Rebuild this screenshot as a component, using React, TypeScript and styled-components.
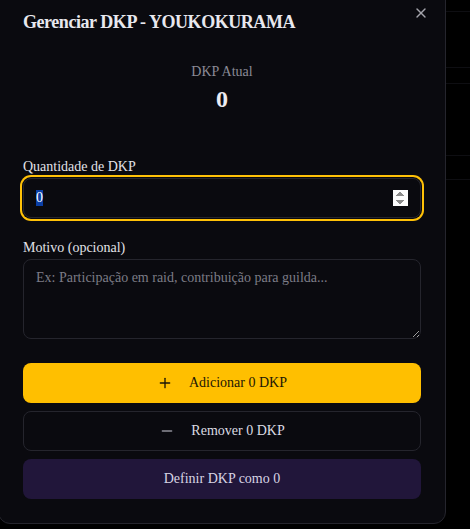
import React, { useEffect, useRef } from 'react';
import styled, { createGlobalStyle } from 'styled-components';
import { Plus, Minus, X } from 'lucide-react';

const GlobalStyle = createGlobalStyle`
  html, body {
    margin: 0;
    padding: 0;
    background: #000;
    overflow: hidden;
  }
  * { box-sizing: border-box; }
`;

const Page = styled.div`
  position: relative;
  width: 470px;
  height: 529px;
  overflow: hidden;
  background: #000;
  font-family: 'Liberation Serif', serif;
`;

// tabela por trás do overlay (só aparece na faixa da direita)
const Backdrop = styled.div`
  display: flex;
  flex-direction: column;
`;

const BackdropRow = styled.div<{ $h: number }>`
  height: ${(p) => p.$h}px;
  border-bottom: 1px solid #0e0e12;
`;

const Dialog = styled.div`
  position: absolute;
  top: -12px;
  left: -2px;
  width: 448px;
  background: #0a0a0f;
  border: 1px solid #25252d;
  border-radius: 12px;
  padding: 24px;
  display: flex;
  flex-direction: column;
  color: #e6e6ec;
`;

const CloseButton = styled.button`
  position: absolute;
  top: 16px;
  right: 16px;
  width: 16px;
  height: 16px;
  padding: 0;
  border: none;
  background: transparent;
  color: #a4a4ac;
  display: flex;
  align-items: center;
  justify-content: center;
  cursor: pointer;
`;

const Title = styled.h2`
  margin: 0;
  font-size: 18px;
  line-height: 18px;
  font-weight: 700;
  letter-spacing: -0.025em;
  color: #e8e8ee;
`;

const Current = styled.div`
  margin-top: 31px;
  display: flex;
  flex-direction: column;
  align-items: center;
`;

const CurrentLabel = styled.div`
  font-size: 14px;
  line-height: 20px;
  color: #8b8b96;
`;

const CurrentValue = styled.div`
  margin-top: 1px;
  font-size: 24px;
  line-height: 32px;
  font-weight: 700;
  color: #ececf2;
`;

const Field = styled.div<{ $top: number }>`
  margin-top: ${(p) => p.$top}px;
  display: flex;
  flex-direction: column;
  gap: 4px;
`;

const Label = styled.label`
  font-size: 14px;
  line-height: 14px;
  color: #e2e2e8;
`;

const NumberInput = styled.input<{ $focused?: boolean }>`
  height: 40px;
  width: 100%;
  padding: 0 12px;
  border: 1px solid #25252d;
  border-radius: 8px;
  background: #0a0a0f;
  color: #e6e6ec;
  font-family: inherit;
  font-size: 14px;
  outline: none;
  box-shadow: ${(p) => (p.$focused ? '0 0 0 1px #0a0a0f, 0 0 0 3px #ffc107' : 'none')};
  &::selection {
    background: #0b3fa6;
    color: #fff;
  }
`;

const TextArea = styled.textarea`
  height: 80px;
  width: 100%;
  padding: 8px 12px;
  border: 1px solid #25252d;
  border-radius: 8px;
  background: #0a0a0f;
  color: #e6e6ec;
  font-family: inherit;
  font-size: 14px;
  line-height: 20px;
  outline: none;
  &::placeholder {
    color: #7c7c86;
  }
`;

const Actions = styled.div`
  margin-top: 24px;
  display: flex;
  flex-direction: column;
  gap: 8px;
`;

const Button = styled.button<{ $variant: 'add' | 'remove' | 'set' }>`
  height: 40px;
  width: 100%;
  border-radius: 8px;
  font-family: inherit;
  font-size: 14px;
  display: flex;
  align-items: center;
  justify-content: center;
  gap: 16px;
  cursor: pointer;
  border: 1px solid
    ${(p) => (p.$variant === 'remove' ? '#25252d' : 'transparent')};
  background: ${(p) =>
    p.$variant === 'add' ? '#ffbf00' : p.$variant === 'set' ? '#21163a' : '#0a0a0f'};
  color: ${(p) =>
    p.$variant === 'add' ? '#1c1606' : p.$variant === 'set' ? '#d8d4e4' : '#dcdce4'};

  svg {
    color: ${(p) => (p.$variant === 'remove' ? '#8e8e98' : 'currentColor')};
  }
`;

const rows = [12, 56, 16, 72, 24];

export default function App() {
  const inputRef = useRef<HTMLInputElement>(null);
  const amount = 0;

  useEffect(() => {
    inputRef.current?.focus();
    inputRef.current?.select();
  }, []);

  return (
    <Page>
      <GlobalStyle />
      <Backdrop>
        {rows.map((h, i) => (
          <BackdropRow key={i} $h={h} />
        ))}
      </Backdrop>
      <Dialog role="dialog">
        <CloseButton aria-label="Fechar">
          <X size={16} strokeWidth={2} />
        </CloseButton>
        <Title>Gerenciar DKP - YOUKOKURAMA</Title>

        <Current>
          <CurrentLabel>DKP Atual</CurrentLabel>
          <CurrentValue>0</CurrentValue>
        </Current>

        <Field $top={45}>
          <Label htmlFor="dkp-amount">Quantidade de DKP</Label>
          <NumberInput
            id="dkp-amount"
            ref={inputRef}
            type="number"
            defaultValue={amount}
            $focused
          />
        </Field>

        <Field $top={23}>
          <Label htmlFor="dkp-reason">Motivo (opcional)</Label>
          <TextArea
            id="dkp-reason"
            placeholder="Ex: Participação em raid, contribuição para guilda..."
          />
        </Field>

        <Actions>
          <Button $variant="add">
            <Plus size={16} strokeWidth={2} />
            Adicionar {amount} DKP
          </Button>
          <Button $variant="remove">
            <Minus size={16} strokeWidth={2} />
            Remover {amount} DKP
          </Button>
          <Button $variant="set">Definir DKP como {amount}</Button>
        </Actions>
      </Dialog>
    </Page>
  );
}
